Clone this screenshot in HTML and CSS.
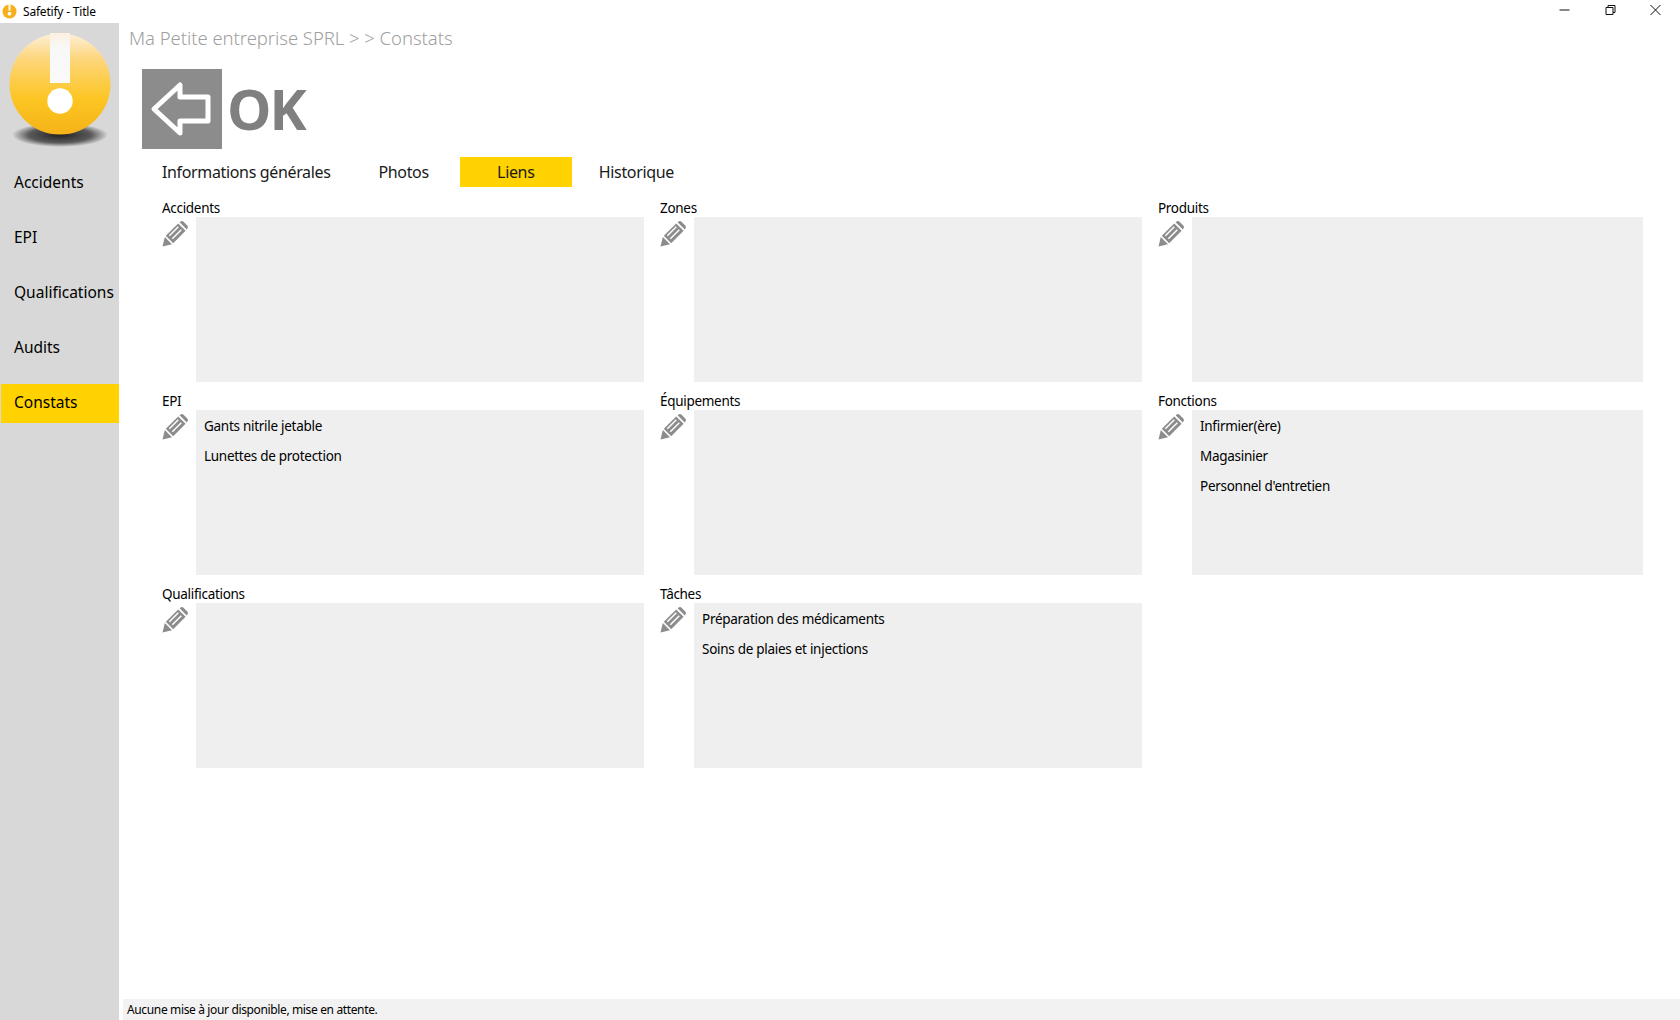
FILE: index.html
```html
<!DOCTYPE html>
<html lang="fr">
<head>
<meta charset="utf-8">
<title>Safetify - Title</title>
<link rel="stylesheet" href="styles.css">
</head>
<body>
<svg class="sprites" width="0" height="0" aria-hidden="true">
  <symbol id="pencil" viewBox="0 0 26 26">
    <path fill="#8c8c8c" d="M0.500 25.500 L2.800 16 L10 23.200 Z"/>
    <path fill="#8c8c8c" d="M3.800 14.800 L16.200 2.400 L23.600 9.800 L11.200 22.200 Z"/>
    <path fill="#8c8c8c" d="M17.600 1.200 L19 0.300 Q20.500 -0.300 21.500 0.700 L25.300 4.500 Q26.300 5.500 25.700 7 L24.800 8.400 Z"/>
    <path stroke="#fff" stroke-width="1.500" fill="none" d="M7.300 14.700 L16.300 5.700 M10.300 17.700 L19.300 8.700"/>
  </symbol>
</svg>
<header class="titlebar">
  <div class="title-left">
    <svg class="app-icon" viewBox="0 0 16 16"><circle cx="8" cy="8" r="7.500" fill="#f6b01e"/><rect x="6.800" y="0" width="2.400" height="7" fill="#fdf3d8"/><circle cx="8" cy="10.300" r="2" fill="#fff"/></svg>
    <span>Safetify - Title</span>
  </div>
  <div class="win-controls">
    <svg viewBox="0 0 12 12"><path d="M1 6H11" stroke="#111" fill="none"/></svg>
    <svg viewBox="0 0 12 12"><path d="M1.500 3.500H8.500V10.500H1.500ZM3.500 3.500V1.500H10.500V8.500H8.500" stroke="#111" fill="none"/></svg>
    <svg viewBox="0 0 12 12"><path d="M1 1L11 11M11 1L1 11" stroke="#111" fill="none"/></svg>
  </div>
</header>
<div class="app">
  <nav class="sidebar">
    <svg class="logo" viewBox="0 0 102 114">
      <defs>
        <linearGradient id="ball" x1="0" y1="0" x2="0" y2="1">
          <stop offset="0" stop-color="#fdf0d8"/>
          <stop offset="0.25" stop-color="#fdd67c"/>
          <stop offset="0.65" stop-color="#fcc522"/>
          <stop offset="1" stop-color="#f5b318"/>
        </linearGradient>
        <radialGradient id="shadow">
          <stop offset="0" stop-color="#222"/>
          <stop offset="0.65" stop-color="#5a5a5a"/>
          <stop offset="1" stop-color="#d8d8d8"/>
        </radialGradient>
        <linearGradient id="bar" x1="0" y1="0" x2="0" y2="1">
          <stop offset="0" stop-color="#fdf0e0"/>
          <stop offset="0.3" stop-color="#f8f8f8"/>
          <stop offset="1" stop-color="#fafafa"/>
        </linearGradient>
      </defs>
      <ellipse cx="51" cy="102" rx="48" ry="12" fill="url(#shadow)"/>
      <circle cx="51" cy="51" r="50.500" fill="url(#ball)"/>
      <rect x="41" y="0" width="20" height="50" fill="url(#bar)"/>
      <circle cx="51" cy="68" r="12.700" fill="#fff"/>
    </svg>
    <ul class="nav-list">
      <li class="nav-item">Accidents</li>
      <li class="nav-item">EPI</li>
      <li class="nav-item">Qualifications</li>
      <li class="nav-item">Audits</li>
      <li class="nav-item active">Constats</li>
    </ul>
  </nav>
  <main class="content">
    <h1 class="breadcrumb">Ma Petite entreprise SPRL &gt; &gt; Constats</h1>
    <div class="toolbar">
      <button class="back-btn" aria-label="Retour">
        <svg viewBox="0 0 80 80"><path d="M12 40 L38 16 V28 H66 V52 H38 V64 Z" fill="none" stroke="#fff" stroke-width="5" stroke-linejoin="round"/></svg>
      </button>
      <span class="ok-btn">OK</span>
    </div>
    <div class="tabs">
      <span class="tab tab-info">Informations générales</span>
      <span class="tab tab-photos">Photos</span>
      <span class="tab tab-liens active">Liens</span>
      <span class="tab tab-hist">Historique</span>
    </div>
    <section class="grid">
      <div class="cell">
        <div class="cell-label">Accidents</div>
        <div class="cell-body"><svg class="pencil"><use href="#pencil"/></svg><ul class="list"></ul></div>
      </div>
      <div class="cell">
        <div class="cell-label">Zones</div>
        <div class="cell-body"><svg class="pencil"><use href="#pencil"/></svg><ul class="list"></ul></div>
      </div>
      <div class="cell">
        <div class="cell-label">Produits</div>
        <div class="cell-body"><svg class="pencil"><use href="#pencil"/></svg><ul class="list"></ul></div>
      </div>
      <div class="cell">
        <div class="cell-label">EPI</div>
        <div class="cell-body"><svg class="pencil"><use href="#pencil"/></svg><ul class="list"><li>Gants nitrile jetable</li><li>Lunettes de protection</li></ul></div>
      </div>
      <div class="cell">
        <div class="cell-label">Équipements</div>
        <div class="cell-body"><svg class="pencil"><use href="#pencil"/></svg><ul class="list"></ul></div>
      </div>
      <div class="cell">
        <div class="cell-label">Fonctions</div>
        <div class="cell-body"><svg class="pencil"><use href="#pencil"/></svg><ul class="list"><li>Infirmier(ère)</li><li>Magasinier</li><li>Personnel d'entretien</li></ul></div>
      </div>
      <div class="cell">
        <div class="cell-label">Qualifications</div>
        <div class="cell-body"><svg class="pencil"><use href="#pencil"/></svg><ul class="list"></ul></div>
      </div>
      <div class="cell">
        <div class="cell-label">Tâches</div>
        <div class="cell-body"><svg class="pencil"><use href="#pencil"/></svg><ul class="list"><li>Préparation des médicaments</li><li>Soins de plaies et injections</li></ul></div>
      </div>
    </section>
    <footer class="status">Aucune mise à jour disponible, mise en attente.</footer>
  </main>
</div>
</body>
</html>
```
FILE: styles.css
```css
* { box-sizing: border-box; }
html, body { margin: 0; height: 100%; }
body {
  width: 1680px;
  height: 1020px;
  overflow: hidden;
  background: #fff;
  color: #000;
  font-family: "Noto Sans", "Open Sans", "Liberation Sans", sans-serif;
  display: flex;
  flex-direction: column;
}
.sprites { position: absolute; }
ul { list-style: none; margin: 0; padding: 0; }

.titlebar {
  height: 23px;
  flex: none;
  display: flex;
  justify-content: space-between;
}
.title-left {
  display: flex;
  align-items: center;
  gap: 6px;
  padding-left: 2px;
  font-size: 12px;
  letter-spacing: -0.2px;
}
.app-icon { width: 15px; height: 17px; }
.win-controls { display: flex; gap: 32.500px; padding: 4px 18px 0 0; }
.win-controls svg { width: 13px; height: 12px; }

.app { flex: 1; display: flex; min-height: 0; }
.sidebar {
  width: 119px;
  flex: none;
  background: #d8d8d8;
  padding-top: 10px;
}
.logo { display: block; width: 102px; height: 114px; margin: 0 0 0 9px; }
.nav-list { padding-left: 1px; }
.nav-item {
  height: 39px;
  margin-top: 16px;
  padding: 0 0 4px 13px;
  display: flex;
  align-items: center;
  font-size: 15.500px;
  white-space: nowrap;
}
.nav-item:first-child { margin-top: 17px; }
.nav-item.active { background: #ffd200; }

.content { flex: 1; min-width: 0; position: relative; display: flex; flex-direction: column; }
.breadcrumb {
  margin: 0;
  padding: 1px 0 0 10px;
  height: 46px;
  font-weight: 300;
  font-size: 18.500px;
  line-height: 28px;
  letter-spacing: -0.05px;
  color: #a0a0a0;
}
.toolbar { display: flex; align-items: center; gap: 5px; padding-left: 23px; height: 80px; }
.back-btn {
  width: 80px;
  height: 80px;
  padding: 0;
  border: 0;
  background: #8c8c8c;
}
.back-btn svg { display: block; width: 80px; height: 80px; }
.ok-btn {
  font-family: "Open Sans", sans-serif;
  font-size: 56px;
  font-weight: 700;
  line-height: 78px;
  padding-bottom: 2px;
  letter-spacing: -2px;
  color: #808080;
}

.tabs { display: flex; height: 30px; margin-top: 8px; align-items: stretch; font-size: 16px; letter-spacing: -0.35px; }
.tab { display: flex; align-items: center; justify-content: center; color: #1a1a1a; }
.tab-info { margin-left: 43px; }
.tab-photos { margin-left: 48px; }
.tab-liens { margin-left: 31px; width: 112px; }
.tab-hist { margin-left: 27px; }
.tab.active { background: #ffd200; }

.grid {
  display: grid;
  grid-template-columns: 482px 482px 485px;
  grid-auto-rows: 193px;
  column-gap: 16px;
  padding-left: 43px;
  margin-top: 12px;
}
.cell { display: flex; flex-direction: column; }
.cell-label { height: 18px; font-size: 13.500px; line-height: 18px; letter-spacing: -0.3px; white-space: nowrap; }
.cell-body { display: flex; height: 165px; }
.pencil { width: 26px; height: 26px; margin-top: 4px; margin-right: 8px; flex: none; }
.list { flex: 1; background: #efefef; padding: 1px 8px 0; font-size: 13.500px; letter-spacing: -0.28px; }
.list li { height: 30px; line-height: 30px; }

.status {
  position: absolute;
  left: 4px;
  right: 0;
  bottom: 0;
  height: 21px;
  padding-left: 4px;
  background: #f2f2f2;
  font-size: 12px;
  line-height: 21px;
  letter-spacing: -0.36px;
}
```
